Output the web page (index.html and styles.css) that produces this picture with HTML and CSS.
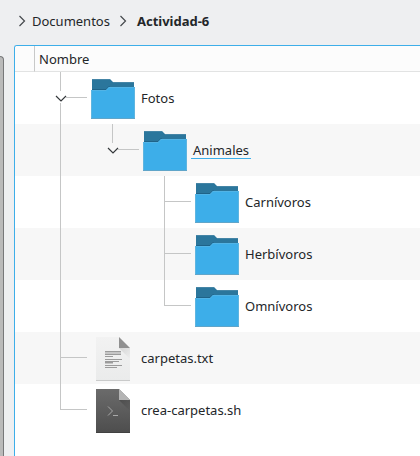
FILE: index.html
```
<!DOCTYPE html>
<html lang="es">
<head>
<meta charset="utf-8">
<meta name="viewport" content="width=device-width, initial-scale=1">
<title>Actividad-6</title>
<link rel="stylesheet" href="styles.css">
</head>
<body>
<svg class="defs" aria-hidden="true">
  <defs>
    <linearGradient id="paper" x1="0" y1="1" x2="0" y2="0">
      <stop offset="0" stop-color="#eaebeb"/><stop offset="1" stop-color="#f2f2f2"/>
    </linearGradient>
    <linearGradient id="dark" x1="0" y1="1" x2="0" y2="0">
      <stop offset="0" stop-color="#4d4d4d"/><stop offset="1" stop-color="#6b6b6b"/>
    </linearGradient>
    <linearGradient id="shade" gradientUnits="userSpaceOnUse" x1="31" y1="14" x2="41" y2="25">
      <stop offset="0" stop-color="#000" stop-opacity=".22"/><stop offset="1" stop-color="#000" stop-opacity="0"/>
    </linearGradient>
  </defs>
  <symbol id="folder" viewBox="0 0 48 48">
    <path d="M3 5h18l3 3h21v10H3z" fill="#2b769c"/>
    <path d="M3 5h18v1H3zM24 8h21v1H24z" fill="#4585a6"/>
    <path d="M3 15h14l3-3h1l-3 4H3z" fill="#1f6388"/>
    <path d="M2 16h15l3-3h26v32H2z" fill="#3daee9"/>
    <path d="M2 16h15l3-3h26v1H20l-3 3H2z" fill="#52b4e6"/>
    <path d="M2 17h1v27H2zM45 14h1v30h-1z" fill="#5fb5e0"/>
    <path d="M2 44h44v1H2z" fill="#60a5c9"/>
  </symbol>
  <symbol id="text" viewBox="0 0 48 48">
    <path d="M7 3h23l11 11v33H7z" fill="url(#paper)"/>
    <path d="M30 14h11v11z" fill="url(#shade)" opacity=".5"/>
    <path d="M30 3v11h11z" fill="#909090"/>
    <path d="M7 46h34v1H7z" fill="#c9caca"/>
    <path d="M16 18h16v2H16zM16 29h8v1h-8z" fill="#c6c6c6"/>
    <path d="M16 17h16v1H16zM16 20h16v1H16zM16 22h8v1h-8zM16 25h17v1H16zM16 27h14v1H16zM16 28h8v1h-8zM16 31h17v1H16zM16 33h12v1H16z" fill="#9b9b9b"/>
  </symbol>
  <symbol id="script" viewBox="0 0 48 48">
    <path d="M7 3h23l11 11v33H7z" fill="url(#dark)"/>
    <path d="M30 14h11v11z" fill="url(#shade)"/>
    <path d="M30 3v11h11z" fill="#b4b4b4"/>
    <path d="M7 46h34v1H7z" fill="#414141"/>
    <path d="M19 20.500l4.500 4.500-4.500 4.500" fill="none" stroke="#a9a9a9"/>
    <path d="M24 29h5v1h-5z" fill="#a9a9a9"/>
  </symbol>
  <symbol id="chevron" viewBox="0 0 8 12">
    <path d="M1.500 1l5 5-5 5" fill="none" stroke="#44484c" stroke-width="1.200"/>
  </symbol>
  <symbol id="line" viewBox="0 0 52 52"><path d="M25 0h1v52h-1z"/></symbol>
  <symbol id="tee" viewBox="0 0 52 52"><path d="M25 0h1v52h-1zM26 25h26v1H26z"/></symbol>
  <symbol id="end" viewBox="0 0 52 52"><path d="M25 0h1v26h-1zM26 25h26v1H26z"/></symbol>
  <symbol id="open-end" viewBox="0 0 52 52">
    <path d="M25 0h1v19h-1zM31 25h21v1H31z"/>
    <path d="M21 24l5 5 5-5" fill="none" stroke="#35393c" stroke-width="1.200"/>
  </symbol>
  <symbol id="open-tee" viewBox="0 0 52 52">
    <path d="M25 0h1v19h-1zM25 31h1v21h-1zM31 25h21v1H31z"/>
    <path d="M21 24l5 5 5-5" fill="none" stroke="#35393c" stroke-width="1.200"/>
  </symbol>
</svg>

<nav class="breadcrumb" aria-label="Ruta">
  <svg class="chevron" aria-hidden="true"><use href="#chevron"/></svg>
  <a href="#">Documentos</a>
  <svg class="chevron" aria-hidden="true"><use href="#chevron"/></svg>
  <a class="current" href="#" aria-current="page">Actividad-6</a>
</nav>

<main class="content">
  <div class="side"></div>
  <div class="view">
    <table class="files">
      <thead>
        <tr><th class="gutter"></th><th scope="col">Nombre</th></tr>
      </thead>
      <tbody>
        <tr><td colspan="2"><div class="item">
          <button class="branch" aria-label="Contraer Fotos" aria-expanded="true"><svg class="tree"><use href="#open-tee"/></svg></button>
          <svg class="icon"><use href="#folder"/></svg><span class="name">Fotos</span>
        </div></td></tr>
        <tr><td colspan="2"><div class="item">
          <svg class="tree"><use href="#line"/></svg>
          <button class="branch" aria-label="Contraer Animales" aria-expanded="true"><svg class="tree"><use href="#open-end"/></svg></button>
          <svg class="icon"><use href="#folder"/></svg><span class="name focused">Animales</span>
        </div></td></tr>
        <tr><td colspan="2"><div class="item">
          <svg class="tree"><use href="#line"/></svg><span class="blank"></span><svg class="tree"><use href="#tee"/></svg>
          <svg class="icon"><use href="#folder"/></svg><span class="name">Carnívoros</span>
        </div></td></tr>
        <tr><td colspan="2"><div class="item">
          <svg class="tree"><use href="#line"/></svg><span class="blank"></span><svg class="tree"><use href="#tee"/></svg>
          <svg class="icon"><use href="#folder"/></svg><span class="name">Herbívoros</span>
        </div></td></tr>
        <tr><td colspan="2"><div class="item">
          <svg class="tree"><use href="#line"/></svg><span class="blank"></span><svg class="tree"><use href="#end"/></svg>
          <svg class="icon"><use href="#folder"/></svg><span class="name">Omnívoros</span>
        </div></td></tr>
        <tr><td colspan="2"><div class="item">
          <svg class="tree"><use href="#tee"/></svg>
          <svg class="icon"><use href="#text"/></svg><span class="name">carpetas.txt</span>
        </div></td></tr>
        <tr><td colspan="2"><div class="item">
          <svg class="tree"><use href="#end"/></svg>
          <svg class="icon"><use href="#script"/></svg><span class="name">crea-carpetas.sh</span>
        </div></td></tr>
      </tbody>
    </table>
  </div>
</main>
</body>
</html>
```
FILE: styles.css
```
* {
  box-sizing: border-box;
}

body {
  margin: 0;
  min-height: 100vh;
  display: flex;
  flex-direction: column;
  background: #eeeff1;
  color: #232629;
  font: 13px/18px "Noto Sans", sans-serif;
}

.defs {
  position: absolute;
  width: 0;
  height: 0;
}

.breadcrumb {
  display: flex;
  align-items: center;
  gap: 6px;
  padding: 12px 18px 15px;
}

.breadcrumb a {
  color: inherit;
  text-decoration: none;
}

.breadcrumb .current {
  font-weight: 700;
}

.chevron {
  width: 8px;
  height: 12px;
}

.breadcrumb a + .chevron {
  margin: 0 4px 0 3px;
}

.content {
  flex: 1;
  display: flex;
  gap: 10px;
}

.side {
  width: 4px;
  margin-top: 11px;
  border: solid #77787a;
  border-width: 1px 1px 0 0;
  border-top-right-radius: 4px;
  background: #bababa;
}

.view {
  flex: 1;
  border: solid #3daee9;
  border-width: 1px 0 0 1px;
  border-top-left-radius: 3px;
  background: #fff;
  overflow: hidden;
}

.files {
  width: 100%;
  border-collapse: separate;
  border-spacing: 0;
}

.files th {
  height: 26px;
  padding: 0 4px;
  border-bottom: 1px solid #e2e3e3;
  background: #fcfcfc;
  font-weight: 400;
  text-align: left;
}

.files .gutter {
  width: 20px;
  border-right: 1px solid #c8c9c9;
}

.files td {
  padding: 0;
}

.files tbody tr:nth-child(even) {
  background: #f7f7f7;
}

.item {
  display: flex;
  align-items: center;
  height: 52px;
  padding-left: 20px;
}

.tree,
.blank {
  display: block;
  flex: none;
  width: 52px;
  height: 52px;
  fill: #c5c6c6;
}

.branch {
  padding: 0;
  border: 0;
  background: none;
}

.icon {
  flex: none;
  width: 48px;
  height: 48px;
  margin: 2px;
}

.name {
  padding: 1px 2px 0;
  border-bottom: 1px solid transparent;
  line-height: 16px;
}

.name.focused {
  border-bottom-color: #3daee9;
}
```
